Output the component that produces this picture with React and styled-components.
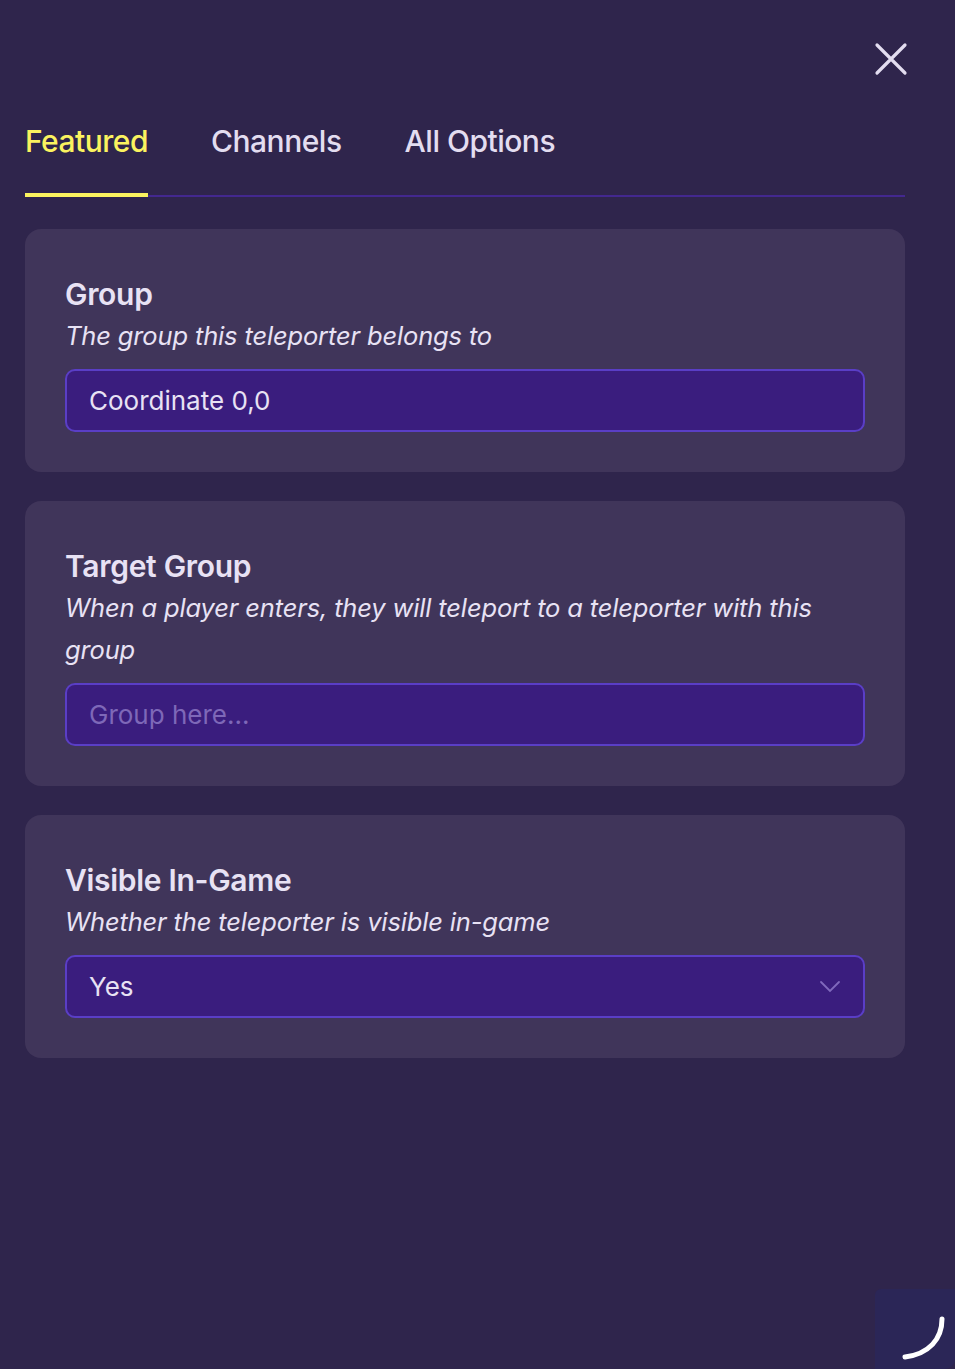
import styled, { createGlobalStyle } from "styled-components";

const GlobalStyle = createGlobalStyle`
  html, body {
    margin: 0;
    padding: 0;
    background: #2f254c;
  }
  body {
    font-family: Inter, "Noto Sans", sans-serif;
    color: #e8e2f4;
  }
  * { box-sizing: border-box; }
`;

const Page = styled.div`
  position: relative;
  min-height: 1369px;
  padding: 0 50px 0 25px;
  background: #2f254c;
  overflow: hidden;
`;

const TopBar = styled.div`
  display: flex;
  justify-content: flex-end;
  padding-top: 42px;
  height: 123px;
`;

const CloseButton = styled.button`
  width: 34px;
  height: 34px;
  margin-right: -3px;
  padding: 0;
  border: none;
  background: none;
  cursor: pointer;
`;

const Tabs = styled.div`
  display: flex;
  gap: 63px;
  border-bottom: 2px solid #43288f;
`;

const Tab = styled.div`
  font-size: 30px;
  font-weight: 500;
  letter-spacing: -0.5px;
  color: ${(p) => (p.$active ? "#fbf35f" : "#e3ddf0")};
  padding-bottom: 34px;
  margin-bottom: -2px;
  border-bottom: 4px solid ${(p) => (p.$active ? "#fbf35f" : "transparent")};
  line-height: 36px;
`;

const Cards = styled.div`
  display: flex;
  flex-direction: column;
  gap: 29px;
  margin-top: 32px;
`;

const Card = styled.section`
  background: #40355a;
  border-radius: 16px;
  padding: 44px 40px 40px;
`;

const Title = styled.h2`
  margin: 0;
  font-size: 30px;
  font-weight: 600;
  letter-spacing: -0.3px;
  line-height: 42px;
  color: #e8e2f4;
`;

const Subtitle = styled.p`
  margin: 0 0 12px;
  font-size: 25.5px;
  font-style: italic;
  line-height: 42px;
  letter-spacing: -0.15px;
  color: #e8e2f4;
`;

const Field = styled.div`
  position: relative;
  display: flex;
  align-items: center;
  height: 63px;
  padding: 0 22px;
  background: #3a1d7e;
  border: 2px solid #5a3ec6;
  border-radius: 10px;
  font-size: 26px;
  color: ${(p) => (p.$placeholder ? "#7e68b8" : "#e8e2f4")};
`;

const Chevron = styled.svg`
  position: absolute;
  right: 22px;
  top: 50%;
  transform: translateY(-50%);
`;

const CornerBadge = styled.div`
  position: absolute;
  right: 0;
  bottom: 0;
  width: 80px;
  height: 80px;
  background: #2b2657;
  border-top-left-radius: 6px;
  border-bottom-right-radius: 10px;
`;

const fields = [
  {
    title: "Group",
    subtitle: "The group this teleporter belongs to",
    value: "Coordinate 0,0",
  },
  {
    title: "Target Group",
    subtitle: "When a player enters, they will teleport to a teleporter with this group",
    value: "Group here...",
    placeholder: true,
  },
  {
    title: "Visible In-Game",
    subtitle: "Whether the teleporter is visible in-game",
    value: "Yes",
    select: true,
  },
];

export default function App() {
  return (
    <Page>
      <GlobalStyle />
      <TopBar>
        <CloseButton aria-label="Close">
          <svg width="34" height="34" viewBox="0 0 34 34">
            <path d="M3 3 L31 31 M31 3 L3 31" stroke="#e3ddf0" strokeWidth="3.2" strokeLinecap="round" />
          </svg>
        </CloseButton>
      </TopBar>
      <Tabs>
        <Tab $active>Featured</Tab>
        <Tab>Channels</Tab>
        <Tab>All Options</Tab>
      </Tabs>
      <Cards>
        {fields.map((f) => (
          <Card key={f.title}>
            <Title>{f.title}</Title>
            <Subtitle>{f.subtitle}</Subtitle>
            <Field $placeholder={f.placeholder}>
              {f.value}
              {f.select && (
                <Chevron width="22" height="14" viewBox="0 0 22 14">
                  <path d="M2 2 L11 11 L20 2" fill="none" stroke="#8069bd" strokeWidth="1.8" strokeLinecap="round" />
                </Chevron>
              )}
            </Field>
          </Card>
        ))}
      </Cards>
      <CornerBadge>
        <svg width="80" height="80" viewBox="0 0 80 80">
          <path d="M67 30 C67 50 54 65 30 68" fill="none" stroke="#ffffff" strokeWidth="5" strokeLinecap="round" />
        </svg>
      </CornerBadge>
    </Page>
  );
}
